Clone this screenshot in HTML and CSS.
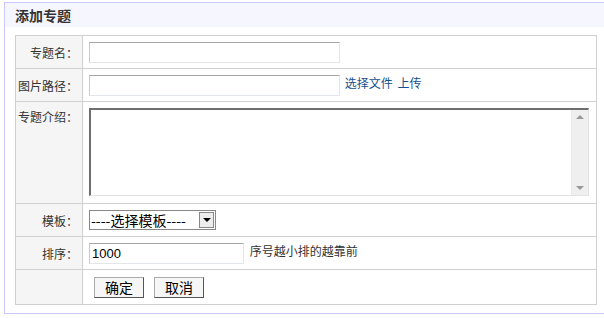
FILE: index.html
```html
<!DOCTYPE html>
<html lang="zh-CN">
<head>
    <meta charset="UTF-8">
    <title>添加专题</title>
    <link rel="stylesheet" href="styles.css">
</head>
<body>
    <div class="panel">
        <h3 class="panel-title">添加专题</h3>
        <table class="form-table">
            <colgroup>
                <col class="col-label">
                <col>
            </colgroup>
            <tr>
                <th>专题名：</th>
                <td><input type="text" class="txt"></td>
            </tr>
            <tr>
                <th>图片路径：</th>
                <td><input type="text" class="txt"> <a href="#" class="link">选择文件</a> <a href="#" class="link">上传</a></td>
            </tr>
            <tr class="tall">
                <th>专题介绍：</th>
                <td><div class="area"><div class="scroll"><span class="arr up"></span><span class="arr down"></span></div></div></td>
            </tr>
            <tr>
                <th>模板：</th>
                <td><div class="select"><span class="select-text">----选择模板----</span><span class="select-btn"></span></div></td>
            </tr>
            <tr>
                <th>排序：</th>
                <td><input type="text" class="txt short" value="1000"> <span class="hint">序号越小排的越靠前</span></td>
            </tr>
            <tr class="last">
                <th></th>
                <td><button class="btn">确定</button><button class="btn">取消</button></td>
            </tr>
        </table>
    </div>
</body>
</html>
```

FILE: styles.css
```css
body {
    margin: 0;
    font-family: "Noto Sans CJK SC", "DejaVu Sans", sans-serif;
    font-size: 12px;
    color: #333;
}

.panel {
    margin: 2px 0 0 4px;
    width: 604px;
    border: 1px solid #c9c9fb;
    padding-bottom: 8px;
}

.panel-title {
    margin: 0;
    height: 24px;
    line-height: 24px;
    padding-left: 10px;
    background: #f6f6ff;
    font-size: 14px;
    font-weight: bold;
    color: #333;
}

.form-table {
    margin: 8px 0 0 10px;
    width: 582px;
    border-collapse: collapse;
    table-layout: fixed;
}

.col-label {
    width: 67px;
}

.form-table th,
.form-table td {
    border: 1px solid #d0d0d0;
    height: 33px;
    padding: 0;
    vertical-align: middle;
    box-sizing: border-box;
}

.form-table th {
    background: #f5f5f5;
    font-weight: normal;
    text-align: right;
    padding-right: 4px;
    white-space: nowrap;
    color: #333;
}

.form-table td {
    padding-left: 6px;
}

.form-table tr.tall th,
.form-table tr.tall td {
    height: 102px;
    vertical-align: top;
}

.form-table tr.tall th {
    padding-top: 6px;
}

.form-table tr.last th,
.form-table tr.last td {
    height: 35px;
}

.txt {
    box-sizing: border-box;
    width: 251px;
    height: 21px;
    margin: 0;
    border: 1px solid #e2e6ea;
    border-top-color: #a5a5a5;
    border-left-color: #c9c9c9;
    padding: 1px 2px;
    font-family: "Liberation Sans", Arial, sans-serif;
    font-size: 13px;
    color: #000;
    vertical-align: middle;
}

.txt.short {
    width: 155px;
}

.link {
    color: #15508e;
    text-decoration: none;
    margin-left: 2px;
}

.hint {
    margin-left: 3px;
}

.area {
    box-sizing: border-box;
    width: 500px;
    height: 88px;
    margin-top: 6px;
    border: 1px solid #e2e2e2;
    border-top: 2px solid #6e6e6e;
    border-left: 2px solid #6e6e6e;
    display: flex;
    justify-content: flex-end;
}

.scroll {
    width: 16px;
    background: #efefef;
    border-left: 1px solid #e8e8e8;
    display: flex;
    flex-direction: column;
    justify-content: space-between;
    align-items: center;
    padding: 5px 0;
}

.arr {
    width: 0;
    height: 0;
    border-left: 4px solid transparent;
    border-right: 4px solid transparent;
}

.arr.up {
    border-bottom: 4px solid #999;
}

.arr.down {
    border-top: 4px solid #999;
}

.select {
    box-sizing: border-box;
    width: 127px;
    height: 20px;
    border: 1px solid #888;
    display: flex;
    align-items: center;
    justify-content: space-between;
    font-size: 14px;
    color: #000;
}

.select-text {
    padding-left: 1px;
    line-height: 18px;
}

.select-btn {
    box-sizing: border-box;
    width: 15px;
    height: 16px;
    margin-right: 1px;
    border: 1px solid #888;
    background: #eee;
    display: flex;
    align-items: center;
    justify-content: center;
}

.select-btn::after {
    content: "";
    border-left: 4px solid transparent;
    border-right: 4px solid transparent;
    border-top: 4px solid #000;
}

.btn {
    box-sizing: border-box;
    width: 50px;
    height: 21px;
    margin: 0 10px 0 5px;
    padding: 0;
    font-family: "Noto Sans CJK SC", sans-serif;
    font-size: 14px;
    line-height: 17px;
    color: #000;
    background: #f6f6f6;
    border: 1px solid #555;
    border-top-color: #aaa;
    border-left-color: #aaa;
}

.btn + .btn {
    margin-left: 0;
}
```
